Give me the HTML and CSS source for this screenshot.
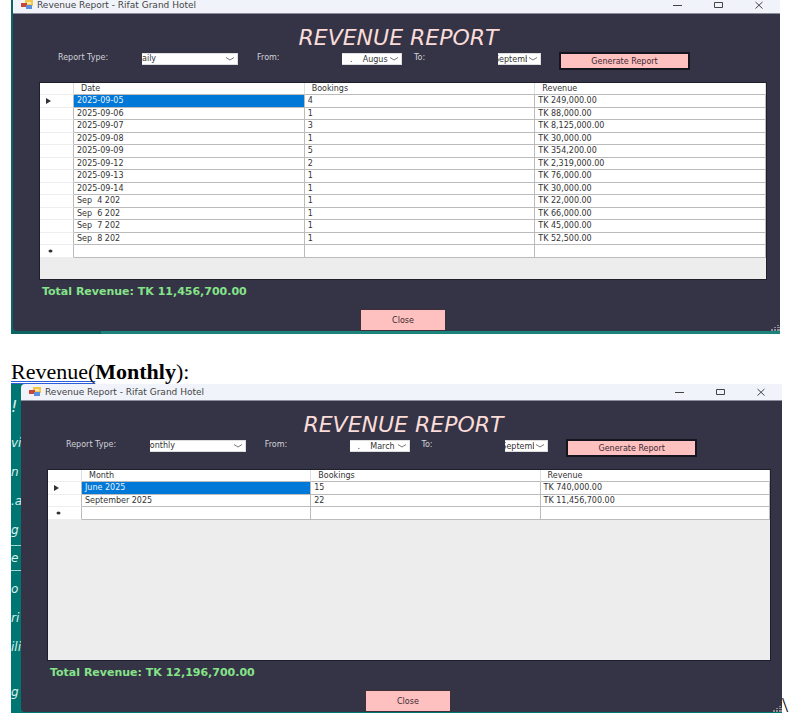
FILE: index.html
```html
<!DOCTYPE html>
<html lang="en">
<head>
<meta charset="utf-8">
<title>Revenue Report</title>
<link rel="stylesheet" href="styles.css">
</head>
<body>
<main class="document">
  <section class="shot shot-daily">
    <div class="window">
      <header class="titlebar">
        <svg class="app-icon" viewBox="0 0 12 10" aria-hidden="true"><rect x="4" y="0" width="8" height="6" fill="#f2c84b"/><rect x="0" y="3" width="6" height="4" fill="#c8473c"/><rect x="5" y="5" width="6" height="4" fill="#5b8fe0"/><rect x="6" y="2" width="4" height="2" fill="#fbe9a6"/></svg>
        <span class="titlebar-text">Revenue Report - Rifat Grand Hotel</span>
        <svg class="window-buttons" viewBox="0 0 92 10" aria-hidden="true"><path d="M0 5.500H9M41.500 2.500h8v5h-8zM82.500 2l7 6.500M89.500 2l-7 6.500" fill="none" stroke="#444"/></svg>
      </header>
      <div class="client">
        <h1 class="heading">REVENUE REPORT</h1>
        <form class="filters">
          <label for="type-daily">Report Type:</label>
          <span class="picker picker-type"><select id="type-daily"><option>aily</option></select><svg viewBox="0 0 8 4" aria-hidden="true"><path d="M0 .5L4 3L8 .5"/></svg></span>
          <label for="from-daily">From:</label>
          <span class="picker picker-from"><input id="from-daily" type="text" value=".    Augus"><svg viewBox="0 0 8 4" aria-hidden="true"><path d="M0 .5L4 3L8 .5"/></svg></span>
          <label for="to-daily">To:</label>
          <span class="picker picker-to"><input id="to-daily" type="text" value="September"><svg viewBox="0 0 8 4" aria-hidden="true"><path d="M0 .5L4 3L8 .5"/></svg></span>
          <button class="generate" type="button">Generate Report</button>
        </form>
        <div class="grid">
          <table class="rows">
            <thead><tr><th class="marker"></th><th>Date</th><th>Bookings</th><th>Revenue</th></tr></thead>
            <tbody>
              <tr><td class="marker"><svg viewBox="0 0 5 6" aria-hidden="true"><path d="M0 0L5 3L0 6z"/></svg></td><td class="selected">2025-09-05</td><td>4</td><td>TK 249,000.00</td></tr>
              <tr><td class="marker"></td><td>2025-09-06</td><td>1</td><td>TK 88,000.00</td></tr>
              <tr><td class="marker"></td><td>2025-09-07</td><td>3</td><td>TK 8,125,000.00</td></tr>
              <tr><td class="marker"></td><td>2025-09-08</td><td>1</td><td>TK 30,000.00</td></tr>
              <tr><td class="marker"></td><td>2025-09-09</td><td>5</td><td>TK 354,200.00</td></tr>
              <tr><td class="marker"></td><td>2025-09-12</td><td>2</td><td>TK 2,319,000.00</td></tr>
              <tr><td class="marker"></td><td>2025-09-13</td><td>1</td><td>TK 76,000.00</td></tr>
              <tr><td class="marker"></td><td>2025-09-14</td><td>1</td><td>TK 30,000.00</td></tr>
              <tr><td class="marker"></td><td>Sep  4 202</td><td>1</td><td>TK 22,000.00</td></tr>
              <tr><td class="marker"></td><td>Sep  6 202</td><td>1</td><td>TK 66,000.00</td></tr>
              <tr><td class="marker"></td><td>Sep  7 202</td><td>1</td><td>TK 45,000.00</td></tr>
              <tr><td class="marker"></td><td>Sep  8 202</td><td>1</td><td>TK 52,500.00</td></tr>
              <tr><td class="marker marker-new"><svg viewBox="0 0 5 6" aria-hidden="true"><ellipse cx="2.500" cy="3" rx="2" ry="1.500"/></svg></td><td></td><td></td><td></td></tr>
            </tbody>
          </table>
        </div>
        <p class="total">Total Revenue: TK 11,456,700.00</p>
        <div class="actions"><button class="close" type="button">Close</button></div>
        <svg class="grip" viewBox="0 0 9 6" aria-hidden="true"><path d="M0 4h2v2H0zM3 4h2v2H3zM6 4h3v2H6zM3 2h2v1H3zM6 2h3v1H6zM6 0h2v1H6z"/></svg>
      </div>
    </div>
  </section>

  <p class="caption"><span class="marked">Revenue(</span><b>Monthly</b>):</p>

  <div class="shot-line">
    <section class="shot shot-monthly">
      <div class="backdrop" aria-hidden="true">
        <span class="tall">!</span><span>vi</span><span>n</span><span>.a</span><span>g</span><span class="boxed">e</span><span>o</span><span>ri</span><span>ili</span><span class="last">g</span>
      </div>
      <div class="window">
        <header class="titlebar">
          <svg class="app-icon" viewBox="0 0 12 10" aria-hidden="true"><rect x="4" y="0" width="8" height="6" fill="#f2c84b"/><rect x="0" y="3" width="6" height="4" fill="#c8473c"/><rect x="5" y="5" width="6" height="4" fill="#5b8fe0"/><rect x="6" y="2" width="4" height="2" fill="#fbe9a6"/></svg>
          <span class="titlebar-text">Revenue Report - Rifat Grand Hotel</span>
          <svg class="window-buttons" viewBox="0 0 92 10" aria-hidden="true"><path d="M0 5.500H9M41.500 2.500h8v5h-8zM82.500 2l7 6.500M89.500 2l-7 6.500" fill="none" stroke="#444"/></svg>
        </header>
        <div class="client">
          <h1 class="heading">REVENUE REPORT</h1>
          <form class="filters">
            <label for="type-monthly">Report Type:</label>
            <span class="picker picker-type"><select id="type-monthly"><option>onthly</option></select><svg viewBox="0 0 8 4" aria-hidden="true"><path d="M0 .5L4 3L8 .5"/></svg></span>
            <label for="from-monthly">From:</label>
            <span class="picker picker-from"><input id="from-monthly" type="text" value=".    March"><svg viewBox="0 0 8 4" aria-hidden="true"><path d="M0 .5L4 3L8 .5"/></svg></span>
            <label for="to-monthly">To:</label>
            <span class="picker picker-to"><input id="to-monthly" type="text" value="September"><svg viewBox="0 0 8 4" aria-hidden="true"><path d="M0 .5L4 3L8 .5"/></svg></span>
            <button class="generate" type="button">Generate Report</button>
          </form>
          <div class="grid">
            <table class="rows">
              <thead><tr><th class="marker"></th><th>Month</th><th>Bookings</th><th>Revenue</th></tr></thead>
              <tbody>
                <tr><td class="marker"><svg viewBox="0 0 5 6" aria-hidden="true"><path d="M0 0L5 3L0 6z"/></svg></td><td class="selected">June 2025</td><td>15</td><td>TK 740,000.00</td></tr>
                <tr><td class="marker"></td><td>September 2025</td><td>22</td><td>TK 11,456,700.00</td></tr>
                <tr><td class="marker marker-new"><svg viewBox="0 0 5 6" aria-hidden="true"><ellipse cx="2.500" cy="3" rx="2" ry="1.500"/></svg></td><td></td><td></td><td></td></tr>
              </tbody>
            </table>
          </div>
          <p class="total">Total Revenue: TK 12,196,700.00</p>
          <div class="actions"><button class="close" type="button">Close</button></div>
          <svg class="grip" viewBox="0 0 9 6" aria-hidden="true"><path d="M0 4h2v2H0zM3 4h2v2H3zM6 4h3v2H6zM3 2h2v1H3zM6 2h3v1H6zM6 0h2v1H6z"/></svg>
        </div>
      </div>
    </section>
    <span class="tail">\</span>
  </div>
</main>
</body>
</html>
```
FILE: styles.css
```css
* { box-sizing: border-box; }

body {
  margin: 0;
  background: #fff;
  color: #000;
  font-family: "Liberation Serif", serif;
}

.document { padding-left: 11px; }

/* screenshots */
.shot {
  display: flex;
  overflow: hidden;
  background: #007672;
  font-family: "DejaVu Sans", sans-serif;
  font-size: 8px;
}

.shot-daily {
  margin-right: 14px;
  padding: 0 0 3px 2px;
  background: linear-gradient(90deg, #0b6463 90px, #1a837c 90px);
}

.shot-daily .window { margin-top: -3px; }

.shot-line {
  display: flex;
  align-items: flex-end;
  padding-right: 6px;
}

.shot-monthly {
  flex: 1;
  padding-bottom: 1px;
}

.window {
  flex: 1;
  min-width: 0;
  border-radius: 4px 0 0 4px;
  overflow: hidden;
}

.titlebar {
  display: flex;
  align-items: center;
  height: 17px;
  padding: 0 15px 0 8px;
  border-bottom: 1px solid #8d8e9c;
  background: #f0f3fa;
  color: #444;
  font-size: 9px;
}

.app-icon {
  width: 12px;
  height: 10px;
  margin-right: 4px;
}

.titlebar-text { flex: 1; }

.window-buttons {
  width: 92px;
  height: 10px;
}

.client {
  position: relative;
  padding-top: 12px;
  background: #343446;
}

.heading {
  margin: 0 0 2px 4px;
  color: #fbdcd8;
  font-size: 22px;
  font-style: italic;
  font-weight: 400;
  line-height: 24px;
  text-align: center;
}

/* filter bar */
.filters {
  --rest: 221fr;
  display: grid;
  grid-template-columns:
    minmax(0, 84fr) minmax(0, 115fr) minmax(0, 85fr) minmax(0, 72fr)
    minmax(0, 84fr) minmax(0, 61fr) minmax(0, var(--rest));
  height: 18px;
  margin: 0;
  padding-left: 45px;
  color: #d2d2d8;
}

.shot-monthly .filters { --rest: 216fr; }

.filters label {
  line-height: 12px;
  white-space: nowrap;
}

.picker {
  position: relative;
  height: 12px;
  margin-top: 1px;
}

.picker-type { width: 96px; }
.picker-from { width: 60px; }
.picker-to { width: 43px; }

.picker select,
.picker input {
  display: block;
  width: 100%;
  height: 12px;
  margin: 0;
  padding: 0;
  border: 1px solid #ddd;
  border-left: 0;
  border-radius: 0;
  background: #fff;
  color: #333;
  font: inherit;
  line-height: 10px;
  appearance: none;
}

.picker-from input { padding: 0 12px 0 8px; }

.picker-to input {
  padding-right: 13px;
  text-indent: -4px;
}

.picker svg {
  position: absolute;
  top: 4px;
  right: 4px;
  width: 8px;
  height: 4px;
  fill: none;
  stroke: #777;
  pointer-events: none;
}

button {
  padding: 0;
  background: #ffc0c0;
  color: #3a2a30;
  font: inherit;
}

.generate {
  width: 131px;
  height: 18px;
  border: 2px solid #15151f;
}

/* data grid */
.grid {
  min-height: 198px;
  margin: 12px 13px 0 26px;
  border: 1px solid #1f1f2b;
  background: #ededed;
}

.shot-monthly .grid {
  min-height: 192px;
  margin-right: 11px;
}

.rows {
  width: 100%;
  table-layout: fixed;
  border-collapse: separate;
  border-spacing: 0;
  background: #fff;
  color: #333;
}

.rows th,
.rows td {
  height: 12px;
  padding: 0 3px;
  border-right: 1px solid #bbb;
  border-bottom: 1px solid #bbb;
  font-weight: 400;
  line-height: 10px;
  text-align: left;
  white-space: pre;
}

.rows tbody tr:nth-child(odd) td { height: 13px; }

.rows th {
  padding-left: 7px;
  border-right-color: #ddd;
}

.rows .marker {
  width: 34px;
  padding: 0 6px;
  border-bottom-color: #eee;
}

.rows .selected {
  background: #0078d7;
  color: #e6f2fc;
}

.marker svg {
  display: block;
  width: 5px;
  height: 6px;
  fill: #333;
}

.rows .marker-new { padding-left: 8px; }

.total {
  margin: 0 0 5px 29px;
  color: #86e389;
  font-size: 11px;
  font-weight: 700;
  line-height: 24px;
}

.actions {
  padding-left: 13px;
  text-align: center;
}

.close {
  display: inline-block;
  width: 86px;
  height: 22px;
  border: 1px solid #3f2f3a;
  vertical-align: top;
}

.grip {
  position: absolute;
  right: 0;
  bottom: 0;
  width: 9px;
  height: 6px;
  fill: #8d8d98;
}

/* menu strip behind the second window */
.backdrop {
  display: flex;
  flex-direction: column;
  width: 10px;
  overflow: hidden;
  color: #dceeec;
  font-size: 12px;
  font-style: italic;
  line-height: 29px;
}

.backdrop span { height: 29px; }
.backdrop .tall { height: 45px; line-height: 45px; font-size: 16px; }

.backdrop .boxed {
  height: 26px;
  margin-bottom: 4px;
  border: solid #a9d3cf;
  border-width: 1px 0;
  line-height: 24px;
}

.backdrop .last { margin-top: 16px; }

/* document text */
.caption {
  margin: 0;
  padding-top: 25px;
  font-size: 22px;
  line-height: 25px;
}

.marked {
  text-decoration: underline double #2b5fd9 1px;
  text-underline-offset: 2px;
  text-decoration-skip-ink: none;
}

.tail {
  font-size: 22px;
  line-height: 16px;
}
```
